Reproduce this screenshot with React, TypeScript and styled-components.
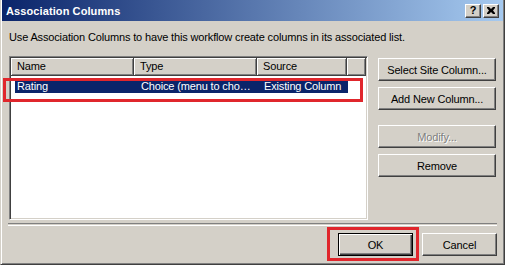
import styled, { createGlobalStyle, css } from "styled-components";

const GlobalStyle = createGlobalStyle`
  html, body {
    margin: 0;
    padding: 0;
    background: #ffffff;
  }
  body {
    font-family: "Liberation Sans", Arial, sans-serif;
    font-size: 11px;
    color: #000000;
  }
`;

const Window = styled.div`
  position: relative;
  box-sizing: border-box;
  width: 505px;
  height: 265px;
  display: flex;
  flex-direction: column;
  background: #d4d0c8;
  border-style: solid;
  border-width: 0 1px 1px 1px;
  border-color: #d4d0c8 #404040 #404040 #d4d0c8;
  box-shadow: inset 1px 0 #ffffff, inset -1px -1px #808080;
  padding: 0 1px 1px 1px;
  overflow: hidden;
`;

const TitleBar = styled.div`
  height: 21px;
  flex: none;
  display: flex;
  align-items: center;
  padding: 0 4px 0 4px;
  background: linear-gradient(to right, #0a246a, #a6caf0);
`;

const Title = styled.div`
  flex: 1;
  color: #ffffff;
  font-weight: bold;
  font-size: 11px;
  letter-spacing: 0.1px;
`;

const CaptionButtons = styled.div`
  display: flex;
  gap: 2px;
`;

const CaptionButton = styled.div`
  box-sizing: border-box;
  width: 16px;
  height: 14px;
  display: flex;
  align-items: center;
  justify-content: center;
  background: #d4d0c8;
  border: 1px solid;
  border-color: #ffffff #404040 #404040 #ffffff;
  box-shadow: inset -1px -1px #808080;
  font-weight: bold;
  font-size: 11px;
  line-height: 1;
  color: #000000;
`;

const Body = styled.div`
  flex: 1;
  display: flex;
  flex-direction: column;
  padding: 0 6px 0 7px;
  letter-spacing: -0.15px;
`;

const Description = styled.div`
  margin-top: 9px;
  line-height: 14px;
  white-space: nowrap;
`;

const Main = styled.div`
  margin-top: 12px;
  display: grid;
  grid-template-columns: 359px 118px;
  column-gap: 10px;
`;

const ListBox = styled.div`
  box-sizing: border-box;
  height: 164px;
  background: #ffffff;
  border: 1px solid;
  border-color: #808080 #ffffff #ffffff #808080;
  box-shadow: inset 1px 1px #404040, inset -1px -1px #d4d0c8;
  padding: 1px;
  display: flex;
  flex-direction: column;
`;

const HeaderRow = styled.div`
  display: grid;
  grid-template-columns: 123px 123px 90px 1fr;
  height: 18px;
  background: #d4d0c8;
`;

const HeaderCell = styled.div`
  box-sizing: border-box;
  padding-left: 6px;
  line-height: 17px;
  border-right: 1px solid #404040;
  border-bottom: 1px solid #404040;
  box-shadow: inset 1px 1px #ffffff, inset -1px -1px #808080;
`;

const Rows = styled.div`
  padding-top: 3px;
`;

const Row = styled.div<{ $selected?: boolean }>`
  display: grid;
  grid-template-columns: 119px 123px 91px;
  margin-left: 4px;
  width: 333px;
  height: 14px;
  line-height: 14px;
  ${(p) =>
    p.$selected &&
    css`
      background: #0a246a;
      color: #ffffff;
    `}
`;

const Cell = styled.div<{ $first?: boolean }>`
  padding-left: ${(p) => (p.$first ? "2px" : "7px")};
  white-space: nowrap;
  overflow: hidden;
`;

const ButtonColumn = styled.div`
  display: flex;
  flex-direction: column;
  padding-top: 2px;
`;

const Button = styled.button<{ $gap?: number; $default?: boolean; $width?: number }>`
  box-sizing: border-box;
  width: ${(p) => (p.$width ? `${p.$width}px` : "100%")};
  height: 23px;
  margin-top: ${(p) => p.$gap ?? 0}px;
  padding: 0;
  font-family: inherit;
  font-size: 11px;
  letter-spacing: inherit;
  color: #000000;
  background: #d4d0c8;
  border: 1px solid;
  border-color: #ffffff #404040 #404040 #ffffff;
  box-shadow: inset -1px -1px #808080;
  ${(p) =>
    p.$default &&
    css`
      border: 1px solid #000000;
      box-shadow: inset 1px 1px #ffffff, inset -1px -1px #404040,
        inset -2px -2px #808080;
    `}
  &:disabled {
    color: #808080;
    text-shadow: 1px 1px #ffffff;
  }
`;

const Separator = styled.div`
  margin: 3px 0 0 -1px;
  height: 1px;
  border-top: 1px solid #808080;
  border-bottom: 1px solid #ffffff;
`;

const Footer = styled.div`
  margin-top: 7px;
  display: flex;
  justify-content: flex-end;
  gap: 9px;
`;

const Highlight = styled.div<{ $x: number; $y: number; $w: number; $h: number }>`
  position: absolute;
  box-sizing: border-box;
  left: ${(p) => p.$x}px;
  top: ${(p) => p.$y}px;
  width: ${(p) => p.$w}px;
  height: ${(p) => p.$h}px;
  border: 3px solid #e0262c;
  pointer-events: none;
`;

const columns = [
  { name: "Rating", type: "Choice (menu to cho…", source: "Existing Column" },
];

export default function App() {
  return (
    <>
      <GlobalStyle />
      <Window>
        <TitleBar>
          <Title>Association Columns</Title>
          <CaptionButtons>
            <CaptionButton>?</CaptionButton>
            <CaptionButton>
              <svg width="8" height="7" viewBox="0 0 8 7">
                <path
                  d="M0 0h2l2 2 2-2h2v1L6 3.5 8 6v1H6L4 5 2 7H0V6l2-2.5L0 1z"
                  fill="#000"
                />
              </svg>
            </CaptionButton>
          </CaptionButtons>
        </TitleBar>
        <Body>
          <Description>
            Use Association Columns to have this workflow create columns in its
            associated list.
          </Description>
          <Main>
            <ListBox>
              <HeaderRow>
                <HeaderCell>Name</HeaderCell>
                <HeaderCell>Type</HeaderCell>
                <HeaderCell>Source</HeaderCell>
                <HeaderCell />
              </HeaderRow>
              <Rows>
                {columns.map((c) => (
                  <Row key={c.name} $selected>
                    <Cell $first>{c.name}</Cell>
                    <Cell>{c.type}</Cell>
                    <Cell>{c.source}</Cell>
                  </Row>
                ))}
              </Rows>
            </ListBox>
            <ButtonColumn>
              <Button>Select Site Column...</Button>
              <Button $gap={6}>Add New Column...</Button>
              <Button $gap={15} disabled>
                Modify...
              </Button>
              <Button $gap={6}>Remove</Button>
            </ButtonColumn>
          </Main>
          <Separator />
          <Footer>
            <Button $default $width={75}>
              OK
            </Button>
            <Button $width={75}>Cancel</Button>
          </Footer>
        </Body>
        <Highlight $x={2} $y={78} $w={360} $h={24} />
        <Highlight $x={326} $y={227} $w={92} $h={34} />
      </Window>
    </>
  );
}
